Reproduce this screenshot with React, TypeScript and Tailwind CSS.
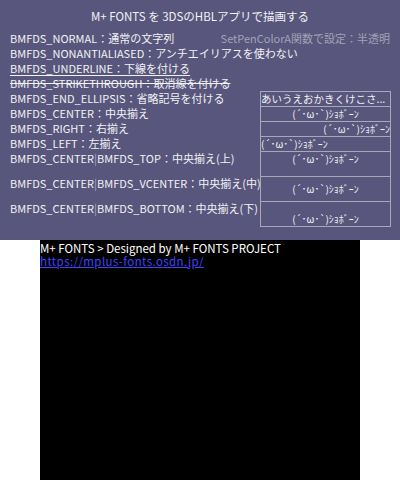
import React from "react";

const Kao = "(´･ω･`)ｼｮﾎﾞｰﾝ";

function Bar() {
  return <span className="text-[#a9a8bc]">|</span>;
}

function Row({
  h,
  label,
  box,
}: {
  h: string;
  label: React.ReactNode;
  box: React.ReactNode;
}) {
  return (
    <div className={`flex ${h}`}>
      <div className="w-[260px] shrink-0 pl-[10px] whitespace-nowrap">{label}</div>
      {box}
    </div>
  );
}

export default function App() {
  const box =
    "w-[131px] shrink-0 border-x border-t border-[#a9a9b6] flex whitespace-nowrap overflow-hidden leading-[14px]";
  const kao = "text-[10px]";
  return (
    <div className="w-[400px] h-[480px] bg-white font-['Noto_Sans_CJK_JP',sans-serif]">
      <div className="h-[240px] bg-[#58567c] text-[#f2f2f4] text-[11px] leading-[15px] pt-[9px]">
        <div className="text-center h-[15px] text-[11.5px] whitespace-nowrap">M+ FONTS を 3DSのHBLアプリで描画する</div>
        <div className="mt-[7px] flex flex-col">
          <div className="flex h-[15px] pl-[10px] pr-[10px] justify-between whitespace-nowrap">
            <span>BMFDS_NORMAL：通常の文字列</span>
            <span className="text-[#a3a2b6]">SetPenColorA関数で設定：半透明</span>
          </div>
          <div className="h-[15px] pl-[10px] whitespace-nowrap">BMFDS_NONANTIALIASED：アンチエイリアスを使わない</div>
          <div className="h-[15px] pl-[10px] whitespace-nowrap">
            <span className="underline underline-offset-[2px]">BMFDS_UNDERLINE：下線を付ける</span>
          </div>
          <div className="h-[15px] pl-[10px] whitespace-nowrap">
            <span className="line-through">BMFDS_STRIKETHROUGH：取消線を付ける</span>
          </div>

          <Row
            h="h-[15px]"
            label="BMFDS_END_ELLIPSIS：省略記号を付ける"
            box={<div className={`${box} h-[15px] justify-start text-[10.5px]`}>あいうえおかきくけこさ...</div>}
          />
          <Row
            h="h-[15px]"
            label="BMFDS_CENTER：中央揃え"
            box={<div className={`${box} h-[15px] justify-center ${kao}`}>{Kao}</div>}
          />
          <Row
            h="h-[15px]"
            label="BMFDS_RIGHT：右揃え"
            box={<div className={`${box} h-[15px] justify-end ${kao}`}>{Kao}</div>}
          />
          <Row
            h="h-[15px]"
            label="BMFDS_LEFT：左揃え"
            box={<div className={`${box} h-[15px] justify-start ${kao}`}>{Kao}</div>}
          />
          <Row
            h="h-[25px]"
            label={
              <>
                BMFDS_CENTER<Bar />BMFDS_TOP：中央揃え(上)
              </>
            }
            box={<div className={`${box} h-[25px] justify-center items-start ${kao}`}>{Kao}</div>}
          />
          <Row
            h="h-[25px]"
            label={
              <>
                BMFDS_CENTER<Bar />BMFDS_VCENTER：中央揃え(中)
              </>
            }
            box={<div className={`${box} h-[25px] justify-center items-center ${kao}`}>{Kao}</div>}
          />
          <Row
            h="h-[26px]"
            label={
              <>
                BMFDS_CENTER<Bar />BMFDS_BOTTOM：中央揃え(下)
              </>
            }
            box={<div className={`${box} border-b h-[26px] justify-center items-end ${kao}`}>{Kao}</div>}
          />
        </div>
      </div>
      <div className="ml-[40px] w-[320px] h-[240px] bg-black text-white text-[11.5px] leading-[13px] pt-[2px]">
        <div className="whitespace-nowrap">M+ FONTS &gt; Designed by M+ FONTS PROJECT</div>
        <div className="whitespace-nowrap">
          <span className="text-[#4242ff] underline underline-offset-[1px] tracking-[0.4px]">https://mplus-fonts.osdn.jp/</span>
        </div>
      </div>
    </div>
  );
}
